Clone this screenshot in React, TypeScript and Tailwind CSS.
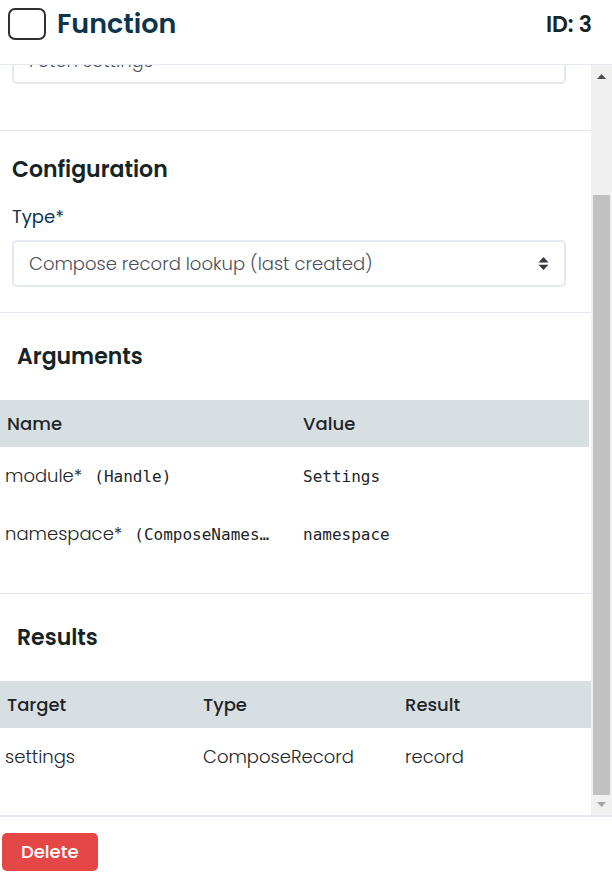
import type { ReactNode } from 'react'

const argumentRows = [
  { name: 'module*', type: '(Handle)', value: 'Settings' },
  { name: 'namespace*', type: '(ComposeNames…', value: 'namespace' },
]

const resultRows = [{ target: 'settings', type: 'ComposeRecord', result: 'record' }]

function SectionTitle({ children }: { children: ReactNode }) {
  return <h2 className="text-[22px] leading-[30px] font-semibold text-[#162425]">{children}</h2>
}

function HeaderCell({ children, className = 'px-[5px]' }: { children: ReactNode; className?: string }) {
  return (
    <th scope="col" className={`h-[47px] text-left text-lg font-medium ${className}`}>
      {children}
    </th>
  )
}

function Cell({ children }: { children: ReactNode }) {
  return <td className="h-[58px] truncate px-[5px] text-lg font-light">{children}</td>
}

function Mono({ children }: { children: ReactNode }) {
  return <code className="font-['DejaVu_Sans_Mono',monospace] text-base font-normal">{children}</code>
}

function ScrollRail() {
  return (
    <div aria-hidden="true" className="flex w-[21px] shrink-0 flex-col items-center bg-[#f0f0f0]">
      <svg className="my-[9px] h-[5px] w-[9px] shrink-0" viewBox="0 0 9 5">
        <path d="M4.5 0 9 5H0z" fill="#4d4d4d" />
      </svg>
      <div className="mt-[107px] w-[17px] flex-1 bg-[#c1c1c1]" />
      <svg className="mt-[7px] mb-2 h-[5px] w-[9px] shrink-0" viewBox="0 0 9 5">
        <path d="M0 0h9L4.5 5z" fill="#a3a3a3" />
      </svg>
    </div>
  )
}

export default function App() {
  return (
    <div className="flex min-h-screen flex-col bg-white font-[Poppins,Inter,sans-serif] text-[#212529]">
      <header className="flex h-[65px] items-start justify-between border-b border-[#e4e9ef] pt-2 pr-5 pl-2">
        <div className="flex items-center gap-[11px]">
          <span className="h-8 w-[38px] rounded-[7px] border-2 border-[#303030]" />
          <h1 className="text-[27px] leading-8 font-semibold text-[#0b344e]">Function</h1>
        </div>
        <p className="text-[22px] leading-[34px] font-semibold text-[#162425]">ID: 3</p>
      </header>

      <div className="flex flex-1">
        <main className="min-w-0 flex-1">
          <section className="border-b border-[#e4e9ef] pr-[25px] pb-[46px] pl-3">
            <div className="flex h-[19px] items-end overflow-hidden">
              <input
                type="text"
                aria-label="Name"
                defaultValue="Fetch settings"
                className="h-[47px] w-full shrink-0 rounded-[5px] border-2 border-[#e4e9ef] px-[15px] text-lg font-light text-[#4d4f5c]"
              />
            </div>
          </section>

          <section className="border-b border-[#e4e9ef] pt-6 pr-[25px] pb-[25px] pl-3">
            <SectionTitle>Configuration</SectionTitle>
            <label htmlFor="function-type" className="mt-[18px] block text-lg leading-7 text-[#0b344e]">
              Type*
            </label>
            <div className="relative mt-[9px]">
              <select
                id="function-type"
                className="h-[47px] w-full appearance-none rounded-[5px] border-2 border-[#e4e9ef] bg-white px-[15px] text-lg font-light text-[#4d4f5c]"
              >
                <option>Compose record lookup (last created)</option>
              </select>
              <svg
                aria-hidden="true"
                className="pointer-events-none absolute top-[17px] right-4 h-[13px] w-3"
                viewBox="0 0 12 13"
              >
                <path d="M5.5 0 10.5 5.4H.5zM.5 7.8h10L5.5 13z" fill="#343a40" />
              </svg>
            </div>
          </section>

          <section className="border-b border-[#e4e9ef] pt-[29px] pb-[30px]">
            <div className="mb-7 pl-[17px]">
              <SectionTitle>Arguments</SectionTitle>
            </div>
            <div className="pr-0.5">
              <table className="w-full table-fixed border-collapse">
                <thead className="bg-[#d8dfe2]">
                  <tr>
                    <HeaderCell className="w-[298px] px-[7px]">Name</HeaderCell>
                    <HeaderCell>Value</HeaderCell>
                  </tr>
                </thead>
                <tbody>
                  {argumentRows.map((row) => (
                    <tr key={row.name}>
                      <Cell>
                        <span className="mr-3">{row.name}</span>
                        <Mono>{row.type}</Mono>
                      </Cell>
                      <Cell>
                        <Mono>{row.value}</Mono>
                      </Cell>
                    </tr>
                  ))}
                </tbody>
              </table>
            </div>
          </section>

          <section className="pt-[29px] pb-[29px]">
            <div className="mb-7 pl-[17px]">
              <SectionTitle>Results</SectionTitle>
            </div>
            <table className="w-full table-fixed border-collapse">
              <thead className="bg-[#d8dfe2]">
                <tr>
                  <HeaderCell className="w-[198px] px-[7px]">Target</HeaderCell>
                  <HeaderCell className="w-[202px] px-[5px]">Type</HeaderCell>
                  <HeaderCell>Result</HeaderCell>
                </tr>
              </thead>
              <tbody>
                {resultRows.map((row) => (
                  <tr key={row.target}>
                    <Cell>{row.target}</Cell>
                    <Cell>{row.type}</Cell>
                    <Cell>{row.result}</Cell>
                  </tr>
                ))}
              </tbody>
            </table>
          </section>
        </main>
        <ScrollRail />
      </div>

      <footer className="border-t-2 border-[#e4e9ef] px-0.5 pt-4 pb-[7px]">
        <button type="button" className="h-[38px] rounded-[5px] bg-[#e54646] px-[19px] text-lg font-medium text-white">
          Delete
        </button>
      </footer>
    </div>
  )
}
